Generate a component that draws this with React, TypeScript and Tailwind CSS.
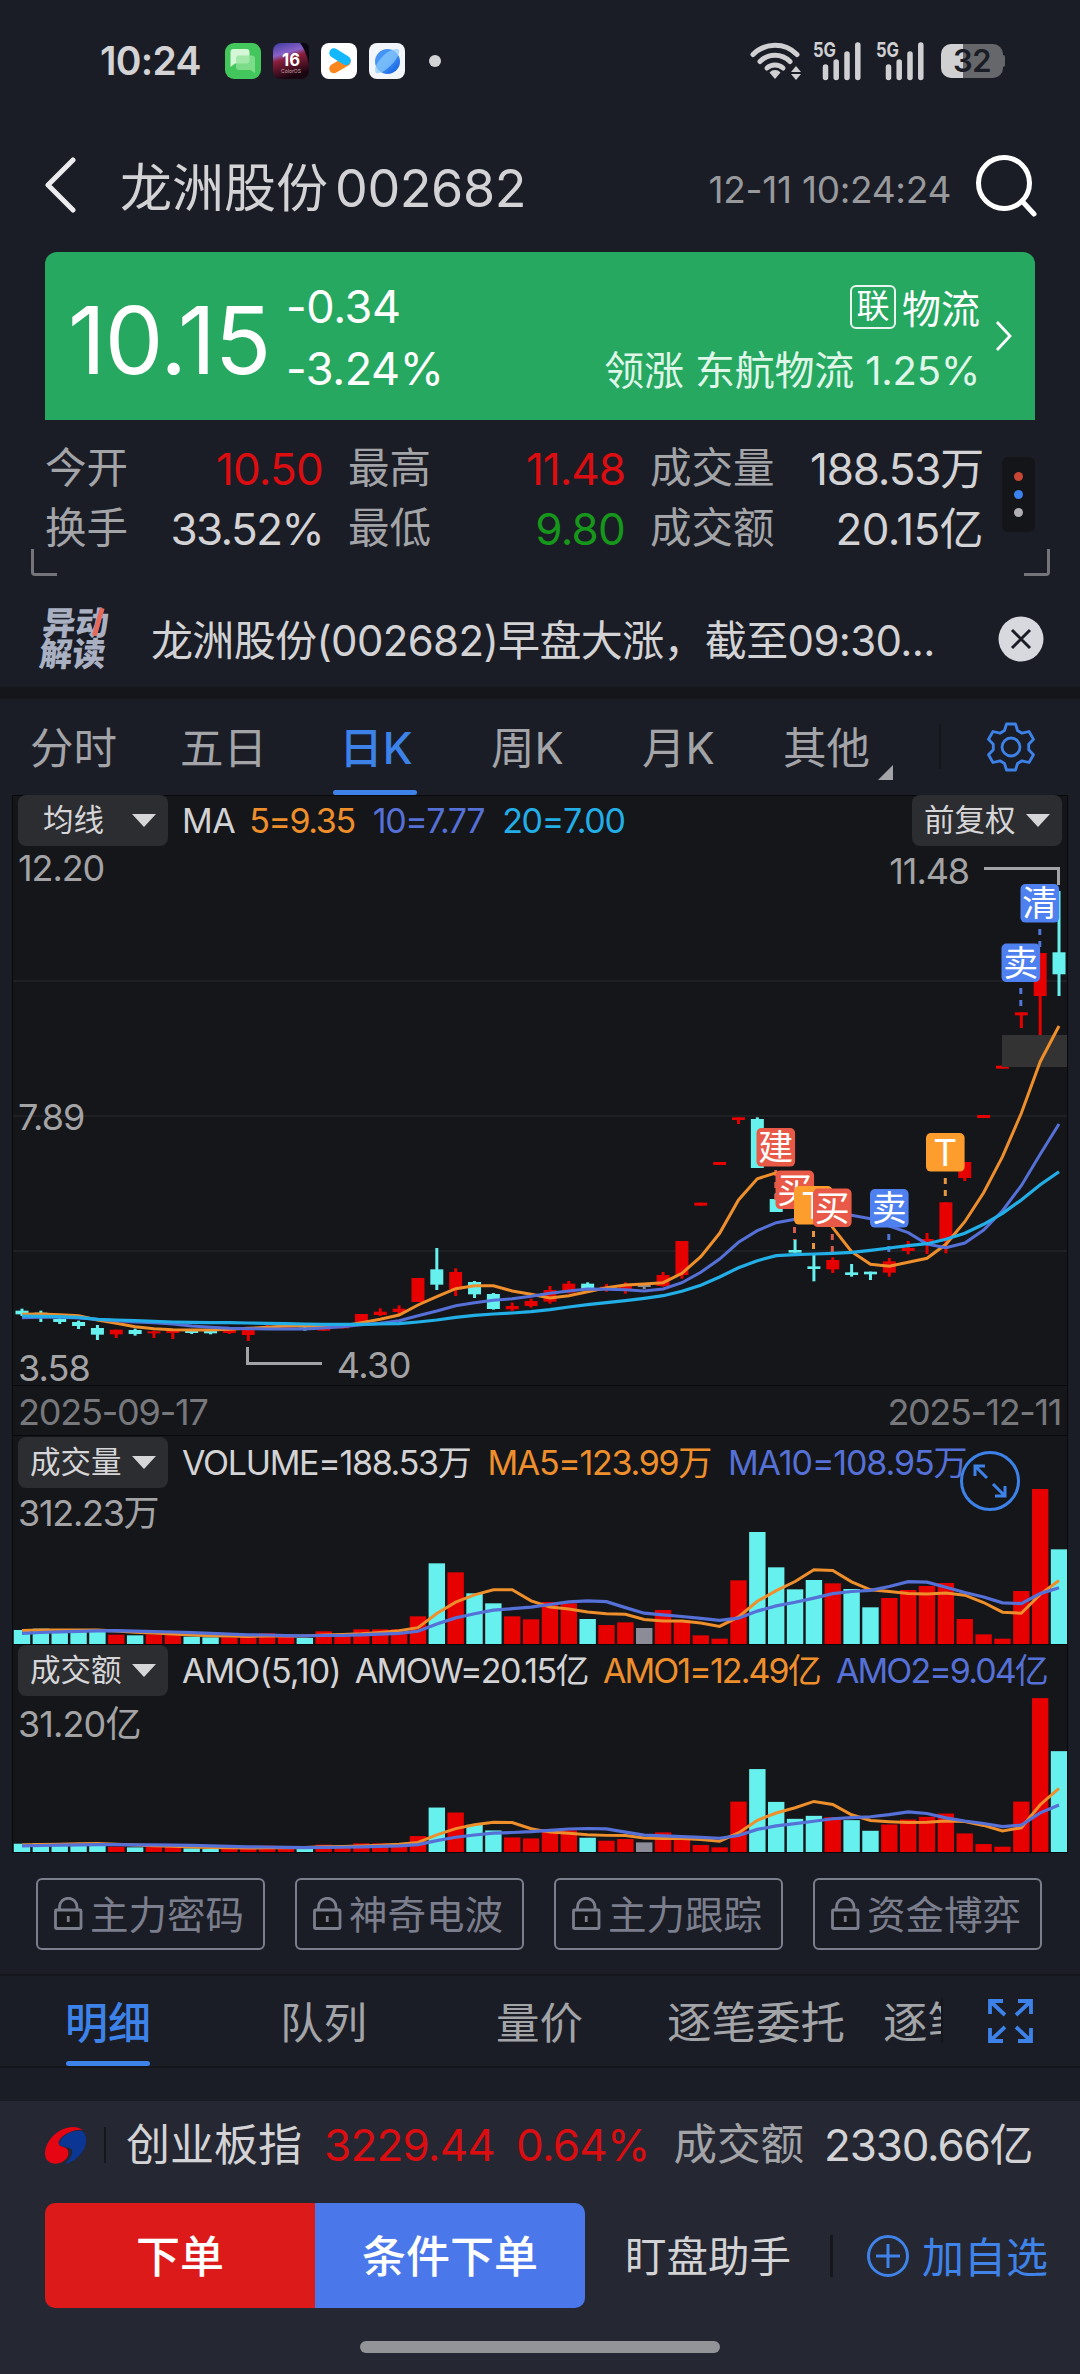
import React from "react";

const FONT = "font-['Inter','Noto_Sans_CJK_SC',sans-serif]";
const RED = "#e60000";
const CYAN = "#66f0ee";
const ORANGE = "#ef8f2c";
const INDIGO = "#5570d6";
const SKY = "#22aee6";

const X0 = 22;
const STEP = 18.855;
const xAt = (i: number) => X0 + STEP * i;

/* kind, body top, body bottom, high, low – thirds of a pixel below the pane origin */
type Candle = [string, number, number, number, number];
const EARLY: Candle[] = [
  ["c", 332, 343, 326, 348], ["c", 338, 345, 332, 366], ["c", 357, 366, 352, 372], ["c", 366, 378, 362, 387],
  ["c", 384, 404, 375, 420], ["r", 389, 403, 389, 414], ["c", 390, 402, 386, 407], ["r", 394, 400, 392, 414],
  ["r", 393, 399, 390, 417], ["c", 392, 399, 392, 402], ["c", 393, 400, 393, 403], ["r", 390, 399, 388, 402],
  ["r", 388, 405, 388, 423], ["r", 380, 386, 373, 388], ["r", 382, 386, 378, 389], ["c", 383, 389, 380, 392],
  ["r", 384, 392, 384, 392], ["r", 378, 385, 378, 385], ["r", 342, 366, 342, 366], ["r", 335, 345, 325, 348],
  ["r", 326, 336, 316, 345], ["r", 234, 306, 234, 306], ["c", 208, 254, 144, 270], ["r", 216, 268, 205, 288],
  ["c", 246, 283, 243, 294], ["c", 282, 327, 279, 329], ["r", 318, 328, 308, 333], ["r", 303, 318, 296, 323],
  ["r", 270, 305, 258, 311], ["r", 251, 278, 243, 280], ["c", 251, 267, 247, 269],
];
const LATE: Candle[] = [
  ["r", 1340, 1347, 1332, 1355], ["r", 1335, 1347, 1327, 1361], ["g", 1334, 1341, 1334, 1347], ["r", 1305, 1338, 1296, 1340],
  ["r", 1203, 1305, 1203, 1316], ["r", 1088, 1097, 1088, 1097], ["r", 966, 975, 966, 975], ["r", 832, 840, 832, 852],
  ["c", 837, 984, 832, 984], ["c", 1077, 1116, 1060, 1116], ["c", 1230, 1238, 1198, 1238], ["c", 1279, 1287, 1245, 1324],
  ["r", 1260, 1288, 1252, 1299], ["c", 1297, 1305, 1272, 1310], ["c", 1295, 1303, 1295, 1320], ["r", 1264, 1298, 1254, 1310],
  ["r", 1224, 1233, 1203, 1243], ["r", 1197, 1206, 1179, 1242], ["r", 1087, 1200, 1087, 1240], ["r", 966, 1014, 966, 1023],
  ["r", 825, 834, 825, 834], ["r", 677, 686, 677, 686], ["r", 517, 526, 517, 564], ["r", 339, 468, 339, 585],
  ["c", 337, 403, 153, 468],
];
const CANDLES: Candle[] = [
  ...EARLY.map(([k, a, b, h, l]): Candle => [k, a + 1080, b + 1080, h + 1080, l + 1080]),
  ...LATE,
];

const MA5 = [
  1423, 1422, 1424, 1427, 1440, 1450, 1460, 1466, 1469, 1470, 1470, 1468, 1465, 1462, 1458, 1458, 1460, 1458, 1448, 1438,
  1425, 1395, 1370, 1346, 1337, 1337, 1353, 1363, 1374, 1367, 1355, 1343, 1335, 1332, 1328, 1300, 1250, 1180, 1080, 1016,
  998, 1010, 1080, 1163, 1235, 1273, 1279, 1267, 1255, 1213, 1145, 1058, 950, 820, 665, 558,
];
const MA10 = [
  1433, 1432, 1432, 1434, 1438, 1442, 1446, 1448, 1452, 1458, 1462, 1465, 1466, 1467, 1467, 1467, 1464, 1460, 1454, 1450,
  1442, 1427, 1413, 1397, 1388, 1381, 1376, 1369, 1360, 1353, 1347, 1348, 1349, 1353, 1347, 1328, 1297, 1257, 1207, 1172,
  1148, 1138, 1130, 1124, 1126, 1136, 1158, 1178, 1212, 1223, 1209, 1170, 1112, 1037, 943, 852,
];
const MA20 = [
  1428, 1429, 1430, 1432, 1438, 1440, 1442, 1444, 1446, 1447, 1448, 1448, 1449, 1450, 1451, 1452, 1453, 1453, 1453, 1452,
  1451, 1446, 1440, 1432, 1426, 1422, 1419, 1415, 1409, 1401, 1394, 1388, 1382, 1375, 1367, 1354, 1336, 1311, 1283, 1262,
  1247, 1244, 1242, 1240, 1237, 1231, 1224, 1217, 1211, 1198, 1180, 1153, 1120, 1080, 1034, 995,
];

const KINDS = "cccccrcrrccrrrrcrrrrrrcrccrrrrcrrgrrrrrccccrccrrrrrrrrrc";
const VOL = [
  42, 46, 42, 40, 40, 28, 26, 29, 28, 22, 20, 20, 24, 32, 24, 18, 38, 30, 44, 44, 44, 83, 242, 215, 152, 122, 83, 74,
  126, 122, 75, 57, 65, 48, 102, 72, 26, 16, 191, 336, 230, 164, 192, 182, 165, 110, 138, 162, 174, 183, 75, 29, 16,
  159, 465, 284,
];
const AMO = [
  25, 27, 26, 25, 24, 16, 14, 16, 16, 11, 9, 11, 13, 19, 13, 11, 22, 18, 26, 26, 26, 48, 134, 119, 82, 65, 44, 41, 68,
  65, 43, 34, 39, 29, 59, 41, 21, 14, 152, 250, 151, 100, 109, 105, 96, 64, 83, 98, 106, 116, 56, 24, 16, 152, 464, 304,
];

const average = (data: number[], history: number[], n: number) => {
  const all = [...history, ...data];
  return data.map((_, i) => {
    const end = i + history.length + 1;
    return all.slice(end - n, end).reduce((s, v) => s + v, 0) / n;
  });
};

const toPath = (ys: number[]) => ys.map((y, i) => `${i ? "L" : "M"}${xAt(i).toFixed(1)} ${y.toFixed(1)}`).join("");
const colorOf = (k: string) => (k === "c" ? CYAN : k === "r" ? RED : "#8b8c98");

function Bars({ data, history, top }: { data: number[]; history: number[]; top: number }) {
  const base = top + 208;
  const line = (n: number) => toPath(average(data, history, n).map((v) => base - v / 3));
  return (
    <svg className="absolute inset-0 h-full w-full" viewBox={`13 ${top} 1054 208`} preserveAspectRatio="none">
      {data.map((v, i) => (
        <rect key={i} x={xAt(i) - 8.2} y={base - v / 3} width={16.4} height={v / 3} fill={colorOf(KINDS[i])} />
      ))}
      <path d={line(5)} fill="none" stroke={ORANGE} strokeWidth={3} />
      <path d={line(10)} fill="none" stroke={INDIGO} strokeWidth={3.2} />
    </svg>
  );
}

const TAGS: [number, number, string, string][] = [
  [1020.5, 884, "清", "#4f80ef"],
  [1001.5, 943.5, "卖", "#4f80ef"],
  [756.5, 1128, "建", "#e85a47"],
  [775.5, 1170.5, "买", "#e85a47"],
  [794, 1186, "T", "#fd9d2e"],
  [813, 1188.5, "买", "#e85a47"],
  [870, 1189, "卖", "#4f80ef"],
  [926, 1133, "T", "#fd9d2e"],
];
const DASHES: [number, number, number, string][] = [
  [1039.8, 929, 953, "#4f78d8"],
  [1020.8, 988, 1008, "#4f78d8"],
  [775.8, 1170, 1200, "#d85a4a"],
  [794.5, 1227, 1240, "#d85a4a"],
  [813.5, 1231, 1255, "#e8973c"],
  [832.3, 1234, 1256, "#d85a4a"],
  [888.8, 1234, 1256, "#4f78d8"],
  [945.3, 1178, 1202, "#e8973c"],
];

function PriceChart() {
  const line = (ys: number[]) => toPath(ys.map((v) => 840 + v / 3));
  return (
    <svg className="absolute inset-0 h-full w-full" viewBox="13 796 1054 589" preserveAspectRatio="none">
      {[981, 1116, 1251].map((y) => (
        <rect key={y} x="13" y={y - 1} width="1054" height="2" fill="#1f2024" />
      ))}
      {CANDLES.slice(0, 55).map(([k, a, b, h, l], i) => (
        <g key={i} fill={colorOf(k)}>
          <rect x={xAt(i) - 6.5} y={840 + a / 3} width={13} height={(b - a) / 3} />
          <rect x={xAt(i) - 1.5} y={840 + h / 3} width={3} height={(l - h) / 3} />
        </g>
      ))}
      <rect x="1002" y="1035" width="66" height="32" fill="#333333" />
      <rect x={xAt(55) - 6.5} y={952.3} width={13} height={22} fill={CYAN} />
      <rect x={xAt(55) - 1.5} y={891} width={3} height={105} fill={CYAN} />
      {DASHES.map(([x, a, b, c], i) => (
        <path key={i} d={`M${x} ${a}V${b}`} stroke={c} strokeWidth={3} strokeDasharray="6 6" />
      ))}
      <path d={line(MA5)} fill="none" stroke={ORANGE} strokeWidth={3} />
      <path d={line(MA10)} fill="none" stroke={INDIGO} strokeWidth={3} />
      <path d={line(MA20)} fill="none" stroke={SKY} strokeWidth={3.2} />
      <path d="M984 868.5H1058.5V885" fill="none" stroke="#a3a3a5" strokeWidth={3} />
      <path d="M247.5 1347V1363.5H322" fill="none" stroke="#a3a3a5" strokeWidth={3} />
      {TAGS.map(([x, y, t, c], i) => (
        <g key={i}>
          <rect x={x} y={y} width={38.6} height={38.6} rx={5} fill={c} />
          <text x={x + 19.3} y={y + (t === "T" ? 32.5 : 32)} textAnchor="middle" fill="#fff" fontSize={t === "T" ? 37 : 35} className={FONT}>
            {t}
          </text>
        </g>
      ))}
    </svg>
  );
}

function Caret() {
  return (
    <svg className="h-[13px] w-6 shrink-0" viewBox="0 0 24 13">
      <path d="M0 0H24L12 13Z" fill="#d6d6d8" />
    </svg>
  );
}

function Picker({ label }: { label: string }) {
  return (
    <button className={`flex h-[51px] w-[150px] shrink-0 items-center rounded-lg bg-[#2c2d31] pr-3 ${label.length === 2 ? "pl-[25px]" : "pl-3"} text-[#d6d6d8]`}>
      <span className="grow text-left text-[30.500px] leading-none tracking-normal">{label}</span>
      <Caret />
    </button>
  );
}

function Signal() {
  return (
    <svg className="h-[38px] w-[50px] overflow-visible" viewBox="0 0 50 38">
      <text x="0" y="15" fontSize="20" fontWeight="700" fill="#d0d0d3" textLength="23" lengthAdjust="spacingAndGlyphs" className={FONT}>5G</text>
      <path d="M12.5 25V35.500M23.200 20V35.500M34 12V35.500M44.800 3V35.500" stroke="#d0d0d3" strokeWidth="5.500" strokeLinecap="round" />
    </svg>
  );
}

function StatusBar() {
  return (
    <div className="flex h-[121px] items-center pl-[100px] pr-[75px]">
      <span className="w-[125px] text-[39px] font-semibold leading-none tracking-[-0.7px] text-[#d3d3d6]">10:24</span>
      <div className="flex gap-3">
        <svg className="size-9" viewBox="0 0 36 36">
          <rect width="36" height="36" rx="9" fill="#43c65b" />
          <path d="M8.500 6h13a3 3 0 0 1 3 3v8.500a3 3 0 0 1-3 3H10L5.500 24V9a3 3 0 0 1 3-3z" fill="#d6f6d8" />
          <path d="M14 12.500h13a3 3 0 0 1 3 3V30l-4.500-3H14a3 3 0 0 1-3-3v-8.500a3 3 0 0 1 3-3z" fill="#8fe39a" opacity=".75" />
        </svg>
        <svg className="size-9" viewBox="0 0 36 36">
          <defs>
            <linearGradient id="os" x1="0" y1="0" x2="0.3" y2="1">
              <stop offset="0" stopColor="#3d3aa0" />
              <stop offset=".35" stopColor="#8a62c8" />
              <stop offset=".5" stopColor="#8a1f3c" />
              <stop offset="1" stopColor="#1a0610" />
            </linearGradient>
          </defs>
          <rect width="36" height="36" rx="8" fill="url(#os)" />
          <path d="M27 0h3a6 6 0 0 1 6 8v14C34 12 31 5 27 0z" fill="#0b0710" />
          <text x="18" y="22.500" textAnchor="middle" fontSize="18" fontWeight="700" fill="#fff" textLength="18" lengthAdjust="spacingAndGlyphs" className={FONT}>16</text>
          <text x="18" y="29.500" textAnchor="middle" fontSize="5" fill="#c9a8b0" className={FONT}>ColorOS</text>
        </svg>
        <svg className="size-9" viewBox="0 0 36 36" fill="none" strokeWidth="9.500" strokeLinecap="round">
          <rect width="36" height="36" rx="8" fill="#fff" />
          <path d="M13 25.500L25 18.500" stroke="#fb861e" />
          <path d="M13 10L25 17.500" stroke="#12b8fb" />
        </svg>
        <svg className="size-9" viewBox="0 0 36 36">
          <defs>
            <linearGradient id="globe" x1="0" y1="0" x2="1" y2="1">
              <stop offset="0" stopColor="#4a94f6" />
              <stop offset=".5" stopColor="#3f93f5" />
              <stop offset="1" stopColor="#0f55dc" />
            </linearGradient>
          </defs>
          <rect width="36" height="36" rx="8" fill="#f2f5f9" />
          <circle cx="18.500" cy="18.500" r="12.500" fill="url(#globe)" />
          <path d="M7 30C4 27 8 18 16 11 22 6 29 5 30 7c1 3-2 8-5 12C20 25 11 32 7 30z" fill="#8ccbfb" opacity=".7" />
        </svg>
      </div>
      <span className="ml-6 size-3 rounded-full bg-[#d3d3d6]" />
      <div className="ml-auto flex items-center">
        <svg className="h-[38px] w-[52px]" viewBox="0 0 52 38">
          <g fill="none" stroke="#d0d0d3" strokeWidth="5" strokeLinecap="round">
            <path d="M3 12.500A31 31 0 0 1 47 12.500" />
            <path d="M10 19.500A21 21 0 0 1 40 19.500" />
            <path d="M17 26A12 12 0 0 1 33 26" />
          </g>
          <path d="M25 37l-5.500-6.500a7.500 7.500 0 0 1 11 0zM46 24l5 6h-10zM46 38l5-6h-10z" fill="#d0d0d3" />
        </svg>
        <div className="ml-[11px]"><Signal /></div>
        <div className="ml-[13px]"><Signal /></div>
        <div className="ml-[15px] flex items-center">
          <div className="flex h-[34px] w-[62px] items-center justify-center rounded-[10px] bg-[linear-gradient(90deg,#d0d0d3_22px,#66676b_22px)]">
            <span className="text-[31px] font-semibold leading-none tracking-[-0.5px] text-[#1b1d26]">32</span>
          </div>
          <span className="h-3 w-0.5 rounded-r bg-[#66676b]" />
        </div>
      </div>
    </div>
  );
}

function Header() {
  return (
    <div className="flex h-[131px] items-center pl-[45px] pr-[43px]">
      <svg className="mb-[3px] h-[56px] w-8" viewBox="0 0 32 56">
        <path d="M28 3L3 28L28 53" fill="none" stroke="#ececee" strokeWidth="5" strokeLinecap="round" strokeLinejoin="round" />
      </svg>
      <h1 className="ml-[43px] flex items-baseline pt-[5px] text-[52px] leading-none text-[#d3d3d5]">
        <span className="w-[215px]">龙洲股份</span>
        <span className="tracking-[-0.4px]">002682</span>
      </h1>
      <span className="ml-auto pt-[5px] text-[37px] leading-none tracking-[-0.3px] text-[#98999c]">12-11 10:24:24</span>
      <svg className="mb-[2px] ml-6 h-16 w-[62px]" viewBox="0 0 62 64">
        <circle cx="29" cy="29" r="25.500" fill="none" stroke="#fff" strokeWidth="5" />
        <path d="M47 47L59 60" stroke="#fff" strokeWidth="5" strokeLinecap="round" />
      </svg>
    </div>
  );
}

function Quote() {
  return (
    <div className="mx-[45px] flex h-[168px] items-center rounded-t-xl bg-[#26a861] pl-[23px] text-white">
      <span className="w-[218px] pt-[8px] text-[93px] leading-none tracking-[-1px]">10.15</span>
      <div className="flex flex-col gap-[17px] pt-[3px] text-[45px] leading-none tracking-[-0.4px]">
        <span>-0.34</span>
        <span>-3.24%</span>
      </div>
      <div className="ml-auto flex flex-col items-end gap-[18px] pt-[3px] text-[39px] leading-none">
        <div className="flex items-center gap-1.5">
          <span className="mb-1 flex h-11 w-[46px] items-center justify-center rounded-md border-2 border-white/90 text-[33px] leading-none">联</span>
          <span>物流</span>
        </div>
        <span className="text-[40px] tracking-[-0.2px] text-[#dff6e8]">领涨 东航物流 1.25%</span>
      </div>
      <svg className="ml-[15px] mr-[22px] h-8 w-[18px]" viewBox="0 0 18 32">
        <path d="M2 2L15 16L2 30" fill="none" stroke="#fff" strokeWidth="2.800" />
      </svg>
    </div>
  );
}

function Stat({ label, value, tone = "text-[#d3d3d5] tracking-[-1.2px]" }: { label: string; value: string; tone?: string }) {
  return (
    <div className="flex items-center justify-between leading-none">
      <span className="text-[41.500px] text-[#a3a4a7]">{label}</span>
      <span className={`text-[44px] ${tone}`}>{value}</span>
    </div>
  );
}

function Stats() {
  return (
    <div className="relative flex h-[156px] pl-[45px]">
      <div className="grid h-[138px] w-[939px] grid-cols-[278px_277px_333px] grid-rows-[60px_60px] gap-x-[25px] pt-[19px]">
        <Stat label="今开" value="10.50" tone="tracking-[-0.8px] text-[#dc0d10]" />
        <Stat label="最高" value="11.48" tone="tracking-[-1px] text-[#dc0d10]" />
        <Stat label="成交量" value="188.53万" />
        <Stat label="换手" value="33.52%" tone="tracking-[-1.6px] text-[#d3d3d5]" />
        <Stat label="最低" value="9.80" tone="tracking-[-0.8px] text-[#16961a]" />
        <Stat label="成交额" value="20.15亿" tone="tracking-[-0.6px] text-[#d3d3d5]" />
      </div>
      <div className="ml-[18px] mt-[37px] flex h-[75px] w-[33px] flex-col items-center justify-center gap-[9px] rounded-md bg-[#141519]">
        <span className="size-[9px] rounded-full bg-[#c74634]" />
        <span className="size-[9px] rounded-full bg-[#3c82ee]" />
        <span className="size-[9px] rounded-full bg-[#b0b0b2]" />
      </div>
      <span className="absolute bottom-0 left-[31px] h-[27px] w-[26px] rounded-bl border-b-[3px] border-l-[3px] border-[#74757a]" />
      <span className="absolute bottom-0 right-[30px] h-[27px] w-[26px] rounded-br border-b-[3px] border-r-[3px] border-[#74757a]" />
    </div>
  );
}

function Notice() {
  return (
    <div className="flex h-[111px] items-center pl-[41px] pr-9 pb-px pt-4">
      <div className="w-[110px] shrink-0 -skew-x-6 text-[33px] font-black leading-[31px] text-[#a9b0c2]">
        <div className="relative w-fit">
          异动
          <span className="absolute right-[8px] top-0 h-7 w-[5px] rotate-[10deg] bg-[#e56a5c]" />
        </div>
        <div>解读</div>
      </div>
      <p className="whitespace-nowrap pt-[3px] text-[42px] leading-none tracking-[-0.65px] text-[#d3d3d5]">龙洲股份(002682)早盘大涨，截至09:30...</p>
      <svg className="ml-auto size-[46px] shrink-0" viewBox="0 0 46 46">
        <circle cx="23" cy="23" r="22.500" fill="#d8d9de" />
        <path d="M14 14L32 32M32 14L14 32" stroke="#1b1d26" strokeWidth="3" />
      </svg>
    </div>
  );
}

function Gear() {
  return (
    <svg className="size-[50px]" viewBox="0 0 50 50" fill="none" stroke="#3c82e8" strokeWidth="2.800" strokeLinejoin="round">
      <path d="M20.500 2h9l2 6.500 4.500 2.700 7-1.700 4.500 7.800-4.800 5v5.400l4.800 5-4.500 7.800-7-1.700-4.500 2.700-2 6.500h-9l-2-6.500-4.500-2.700-7 1.700-4.500-7.800 4.800-5v-5.400l-4.800-5 4.500-7.800 7 1.700 4.500-2.700z" />
      <circle cx="25" cy="25" r="9" />
    </svg>
  );
}

function PeriodTabs() {
  return (
    <div className="flex h-[96px] text-[43.500px] leading-[99px] text-[#a3a4a7]">
      <span className="w-[150px] pl-[30px]">分时</span>
      <span className="w-[183px] pl-[30px]">五日</span>
      <span className="relative w-[84px] pl-[2px] text-center font-medium text-[#3c82e8]">
        日K
        <span className="absolute bottom-0 left-0 h-[5px] w-full rounded-sm bg-[#3c82e8]" />
      </span>
      <span className="ml-[74px] w-[151px]">周K</span>
      <span className="w-[141px]">月K</span>
      <span>其他</span>
      <svg className="ml-2 mt-[66px] size-[15px]" viewBox="0 0 15 15"><path d="M15 0V15H0Z" fill="#a3a4a7" /></svg>
      <span className="ml-[46px] mt-[25px] h-[45px] w-0.5 bg-[#15161a]" />
      <div className="ml-[45px] mt-[23px]"><Gear /></div>
    </div>
  );
}

function ChartPanel() {
  return (
    <div className="mx-3 border border-[#09090b] bg-[#15161a] text-[34px] leading-none text-[#a3a3a5]">
      <div className="relative h-[589px]">
        <PriceChart />
        <div className="relative flex h-full flex-col px-[5px]">
          <div className="-mt-px flex items-center text-[34px]">
            <Picker label="均线" />
            <span className="ml-[14px] tracking-[-0.5px] text-[#d3d3d5]">MA</span>
            <span className="ml-[14px] tracking-[-1.4px] text-[#ef8f2c]">5=9.35</span>
            <span className="ml-[18px] tracking-[-1.4px] text-[#5570d6]">10=7.77</span>
            <span className="ml-[18px] tracking-[-1.3px] text-[#22aee6]">20=7.00</span>
            <div className="ml-auto"><Picker label="前复权" /></div>
          </div>
          <div className="mt-[4px] flex justify-between text-[36px] tracking-[-1.1px]">
            <span>12.20</span>
            <span className="mr-[93px] mt-[3px]">11.48</span>
          </div>
          <span className="mt-[210px] text-[36px] tracking-[-0.9px]">7.89</span>
          <div className="-mb-[3px] mt-auto flex items-center text-[36px] tracking-[-0.9px]">
            <span>3.58</span>
            <span className="ml-[247px] pb-[5px] tracking-[-0.6px]">4.30</span>
          </div>
        </div>
      </div>
      <div className="flex h-[51px] items-center justify-between border-y border-[#09090b] pl-[5px] pr-[6px] pt-[2px] text-[36px] text-[#77787c]">
        <span className="tracking-[-1.2px]">2025-09-17</span>
        <span className="tracking-[-1.4px]">2025-12-11</span>
      </div>
      <div className="relative h-[208px]">
        <Bars data={VOL} history={[24, 24, 24, 24, 24, 40, 40, 40, 40]} top={1436} />
        <div className="relative flex items-center whitespace-nowrap pl-[5px] pt-px tracking-[-1.3px]">
          <Picker label="成交量" />
          <span className="ml-[14px] text-[#d3d3d5]">VOLUME=188.53万</span>
          <span className="ml-[17px] text-[#ef8f2c]">MA5=123.99万</span>
          <span className="ml-[17px] tracking-[-1.1px] text-[#5570d6]">MA10=108.95万</span>
        </div>
        <span className="relative ml-[5px] mt-[7px] block text-[36px] tracking-[-1.3px]">312.23万</span>
        <svg className="absolute right-[46px] top-[14px] size-[62px]" viewBox="0 0 62 62" fill="none" stroke="#3c82e8" strokeWidth="3">
          <circle cx="31" cy="31" r="28.500" />
          <path d="M16 26V16H26M16 16L28 28M46 36V46H36M46 46L34 34" />
        </svg>
      </div>
      <div className="relative h-[208px] border-t border-[#09090b]">
        <Bars data={AMO} history={[16, 16, 16, 16, 16, 20, 20, 20, 20]} top={1645} />
        <div className="relative flex items-center whitespace-nowrap pl-[5px]">
          <Picker label="成交额" />
          <span className="ml-[14px] tracking-[-0.9px] text-[#d3d3d5]">AMO(5,10)</span>
          <span className="ml-[14px] tracking-[-1.6px] text-[#d3d3d5]">AMOW=20.15亿</span>
          <span className="ml-[15px] tracking-[-1.9px] text-[#ef8f2c]">AMO1=12.49亿</span>
          <span className="ml-[16px] tracking-[-1.9px] text-[#5570d6]">AMO2=9.04亿</span>
        </div>
        <span className="relative ml-[5px] mt-[10px] block text-[36px] tracking-[-0.9px]">31.20亿</span>
      </div>
    </div>
  );
}

function LockedTools() {
  return (
    <div className="flex gap-[30px] px-9 pb-6 pt-[25px]">
      {["主力密码", "神奇电波", "主力跟踪", "资金博弈"].map((t) => (
        <button key={t} className="flex h-[72px] w-[229px] items-center rounded-md border-2 border-[#7b7e8c] pl-4 text-[#7b7e8c]">
          <svg className="h-[34px] w-[29px]" viewBox="0 0 29 34" fill="none" stroke="#7b7e8c" strokeWidth="2.800">
            <path d="M5.500 13V10a8.500 8.500 0 0 1 17.500 0v3" />
            <rect x="1.500" y="13" width="25.500" height="18.500" rx="1" fill="#15161a" />
            <path d="M14.250 19V25" />
          </svg>
          <span className="ml-[7px] pt-[2px] text-[38.500px] leading-none">{t}</span>
        </button>
      ))}
    </div>
  );
}

function DetailTabs() {
  return (
    <div className="flex h-[94px] border-y-2 border-[#15161a] text-[43.500px] leading-[95px] text-[#a3a4a7]">
      <div className="flex w-[941px] overflow-hidden whitespace-nowrap">
        <span className="relative ml-[65px] w-[86px] shrink-0 text-[43px] font-medium text-[#3c82e8]">
          明细
          <span className="absolute bottom-0 left-px h-[5px] w-[84px] rounded-sm bg-[#3c82e8]" />
        </span>
        <span className="ml-[129px] shrink-0">队列</span>
        <span className="ml-[129px] shrink-0">量价</span>
        <span className="ml-[84px] shrink-0 text-[44.500px]">逐笔委托</span>
        <span className="ml-[38px] shrink-0 text-[44.500px]">逐笔成交</span>
      </div>
      <span className="mt-[22px] h-[45px] w-0.5 bg-[#15161a]" />
      <svg className="ml-[45px] mt-[23px] h-[44px] w-[45px]" viewBox="0 0 45 44" fill="none" stroke="#3c82e8" strokeWidth="3.800">
        <path d="M2 15V2H15M2 2L17 16M30 2H43V15M43 2L28 16M2 29V42H15M2 42L17 28M30 42H43V29M43 42L28 28" />
      </svg>
    </div>
  );
}

function BottomBar() {
  return (
    <div className="mt-[33px] h-[273px] bg-[#252733] pt-px">
      <div className="flex h-[86px] items-center pl-[45px] text-[44px] leading-none">
        <svg className="h-[38px] w-[42px]" viewBox="0 0 42 38" fill="none">
          <path d="M37 5C42 8 43 18 37 26C33 32 26 37 20 38C25 33 28 28 27 24C26 20 14 22 14 18C15 10 28 3 37 5Z" fill="#0c3694" />
          <path d="M38 4C30-2 16 1 7 11C0 19-2 28 2 34C6 39 16 39 21 33C25 28 24 22 18 21C13 20 12 16 16 12C22 6 31 3 38 4Z" fill="#e60512" />
        </svg>
        <span className="ml-[17px] h-9 w-0.5 bg-[#16171c]" />
        <span className="ml-5 text-[#d3d3d5]">创业板指</span>
        <span className="ml-[22px] tracking-[-0.8px] text-[#dc0d10]">3229.44</span>
        <span className="ml-[21px] tracking-[-0.7px] text-[#dc0d10]">0.64%</span>
        <span className="ml-6 text-[43.500px] text-[#a3a4a7]">成交额</span>
        <span className="ml-[20px] tracking-[-1.2px] text-[#d3d3d5]">2330.66亿</span>
      </div>
      <div className="mt-[15px] flex h-[105px] items-center pl-[45px] leading-none">
        <button className="h-full w-[270px] rounded-l-[10px] bg-[#dc1a1a] pt-[3px] text-[44px] font-medium text-white">下单</button>
        <button className="h-full w-[270px] rounded-r-[10px] bg-[#4a78ea] pt-[3px] text-[44px] font-medium text-white">条件下单</button>
        <span className="ml-10 pt-[4px] text-[41.500px] text-[#d3d3d5]">盯盘助手</span>
        <span className="ml-[39px] h-[42px] w-[3px] bg-[#16171c]" />
        <svg className="ml-[34px] size-[42px]" viewBox="0 0 42 42" fill="none" stroke="#3f83e8" strokeWidth="3">
          <circle cx="21" cy="21" r="19.500" />
          <path d="M9 21H33M21 9V33" />
        </svg>
        <span className="ml-[13px] pt-[4px] text-[42px] text-[#3f83e8]">加自选</span>
      </div>
      <div className="mx-auto mt-[33px] h-3 w-[360px] rounded-full bg-[#939497]" />
    </div>
  );
}

export default function App() {
  return (
    <div className={`h-[2374px] w-[1080px] overflow-hidden bg-[#1b1d26] ${FONT}`}>
      <StatusBar />
      <Header />
      <Quote />
      <Stats />
      <Notice />
      <div className="h-3 bg-[#15161a]" />
      <PeriodTabs />
      <ChartPanel />
      <LockedTools />
      <DetailTabs />
      <BottomBar />
    </div>
  );
}
